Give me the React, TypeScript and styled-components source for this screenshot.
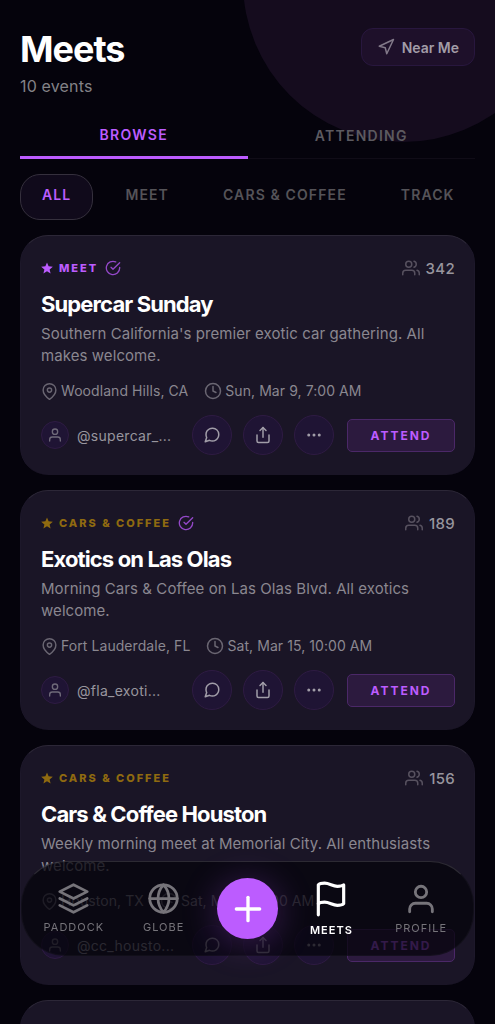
import React from 'react';
import styled, { createGlobalStyle, css } from 'styled-components';
import {
  FiCheckCircle,
  FiClock,
  FiFlag,
  FiGlobe,
  FiLayers,
  FiMapPin,
  FiMessageCircle,
  FiMoreHorizontal,
  FiNavigation,
  FiPlus,
  FiShare,
  FiUser,
  FiUsers,
} from 'react-icons/fi';

const ACCENT = '#bc5cff';
const GOLD = '#8f6a10';

const GlobalStyle = createGlobalStyle`
  *, *::before, *::after { box-sizing: border-box; }
  body {
    margin: 0;
    background: #05030c;
    color: #fff;
    font-family: Inter, "Liberation Sans", sans-serif;
  }
  button { font: inherit; color: inherit; cursor: pointer; }
  h1, h2, p { margin: 0; }
`;

const Screen = styled.div`
  position: relative;
  height: 100vh;
  overflow: hidden;
  padding: 0 20px;
`;

const Glow = styled.div`
  position: absolute;
  top: -178px;
  right: -68px;
  width: 320px;
  height: 320px;
  border-radius: 50%;
  background: #150c1e;
`;

const Header = styled.header`
  position: relative;
  display: flex;
  justify-content: space-between;
  align-items: flex-start;
  padding-top: 28px;
`;

const Title = styled.h1`
  font-size: 36px;
  line-height: 42px;
  font-weight: 700;
  letter-spacing: -1px;
`;

const Subtitle = styled.p`
  margin-top: 5px;
  font-size: 16px;
  line-height: 22px;
  letter-spacing: 0.01em;
  color: #838287;
`;

const NearMe = styled.button`
  display: flex;
  align-items: center;
  gap: 7px;
  height: 38px;
  padding: 0 15px;
  border: 1px solid #28173e;
  border-radius: 12px;
  background: #1e102a;
  font-size: 14px;
  font-weight: 600;
  color: #a29ca7;
  svg { color: #827989; }
`;

const Tabs = styled.nav`
  position: relative;
  display: flex;
  height: 44px;
  margin-top: 18px;
  border-bottom: 1px solid #100c17;
`;

const Tab = styled.button<{ $active?: boolean }>`
  flex: 1;
  height: 44px;
  padding: 0 0 ${(p) => (p.$active ? '2px' : '0')};
  border: 0;
  border-bottom: 3px solid ${(p) => (p.$active ? ACCENT : 'transparent')};
  background: none;
  font-size: 14px;
  font-weight: 600;
  letter-spacing: 0.09em;
  color: ${(p) => (p.$active ? ACCENT : '#5c5a60')};
`;

const Filters = styled.div`
  position: relative;
  display: flex;
  gap: 10px;
  margin: 15px -20px 0 0;
  overflow: hidden;
`;

const Filter = styled.button<{ $active?: boolean }>`
  flex: none;
  height: 46px;
  padding: 0 21px 6px;
  border: 1px solid ${(p) => (p.$active ? '#35303d' : 'transparent')};
  border-radius: 20px;
  background: ${(p) => (p.$active ? '#100a1b' : 'none')};
  font-size: 14px;
  font-weight: 600;
  letter-spacing: 0.08em;
  color: ${(p) => (p.$active ? ACCENT : '#555358')};
`;

const Feed = styled.main`
  position: relative;
  display: flex;
  flex-direction: column;
  gap: 15px;
  margin-top: 15px;
`;

const Card = styled.article`
  padding: 20px 19px 20px 20px;
  border: 1px solid #1d182a;
  border-top-color: #2c2737;
  border-bottom-width: 0;
  border-radius: 28px;
  background: #1a1526;
`;

const CardTop = styled.div`
  display: flex;
  justify-content: space-between;
  align-items: center;
  height: 24px;
`;

const Kind = styled.div<{ $gold?: boolean }>`
  display: flex;
  align-items: center;
  font-size: 11px;
  font-weight: 800;
  letter-spacing: 0.18em;
  color: ${(p) => (p.$gold ? GOLD : ACCENT)};
`;

const KindLabel = styled.span`
  margin: 0 7px 0 6px;
`;

const Verified = styled(FiCheckCircle)`
  color: #9448c9;
`;

const Count = styled.div`
  display: flex;
  align-items: center;
  gap: 6px;
  font-size: 15px;
  font-weight: 500;
  letter-spacing: 0.02em;
  color: #98959e;
  svg { color: #57515f; }
`;

const CardTitle = styled.h2`
  margin-top: 10px;
  font-size: 22px;
  line-height: 28px;
  font-weight: 700;
  letter-spacing: -0.04em;
`;

const Description = styled.p`
  margin-top: 5px;
  font-size: 15px;
  line-height: 22px;
  letter-spacing: 0.005em;
  color: #8a8790;
`;

const Meta = styled.div`
  display: flex;
  gap: 16px;
  margin-top: 14px;
  font-size: 14px;
  line-height: 20px;
  letter-spacing: 0.005em;
  color: #8a8790;
`;

const MetaItem = styled.span`
  display: flex;
  align-items: center;
  gap: 3px;
  svg { color: #6a6672; }
`;

const Actions = styled.div`
  display: flex;
  align-items: center;
  gap: 11px;
  margin-top: 14px;
`;

const Host = styled.div`
  display: flex;
  flex: 1;
  align-items: center;
  gap: 8px;
  min-width: 0;
  font-size: 14px;
  letter-spacing: 0.02em;
  color: #98959e;
`;

const round = css`
  display: flex;
  flex: none;
  align-items: center;
  justify-content: center;
  border: 1px solid #2e1b43;
  border-radius: 50%;
  background: #1f1434;
`;

const Avatar = styled.span`
  ${round}
  width: 28px;
  height: 28px;
  color: #6f6a79;
`;

const IconButton = styled.button`
  ${round}
  width: 40px;
  height: 40px;
  padding: 0;
  color: #a19da8;
`;

const Attend = styled.button`
  width: 108px;
  height: 33px;
  margin-left: 2px;
  padding: 0;
  border: 1px solid #4b2868;
  border-radius: 5px;
  background: #2c1a3e;
  font-size: 12px;
  font-weight: 700;
  letter-spacing: 2px;
  color: ${ACCENT};
`;

const BottomNav = styled.nav`
  position: fixed;
  left: 21px;
  right: 21px;
  bottom: 68px;
  display: flex;
  align-items: center;
  height: 95px;
  padding: 0 7px;
  border: 1px solid rgba(255, 255, 255, 0.03);
  border-top-color: rgba(255, 255, 255, 0.14);
  border-radius: 44px;
  background: rgba(6, 4, 12, 0.75);
`;

const NavItem = styled.button<{ $active?: boolean }>`
  display: flex;
  flex: 1;
  flex-direction: column;
  align-items: center;
  gap: 4px;
  padding: 0;
  border: 0;
  background: none;
  font-size: 11px;
  line-height: 16px;
  font-weight: ${(p) => (p.$active ? 600 : 400)};
  letter-spacing: 1px;
  color: ${(p) => (p.$active ? '#fff' : '#76747a')};
`;

const Slot = styled.div`
  display: flex;
  flex: none;
  justify-content: center;
  width: 78px;
`;

const AddButton = styled.button`
  display: flex;
  align-items: center;
  justify-content: center;
  width: 61px;
  height: 61px;
  padding: 0;
  border: 0;
  border-radius: 50%;
  background: ${ACCENT};
  box-shadow: 0 4px 36px rgba(188, 92, 255, 0.27);
`;

const Star = () => (
  <svg width="12" height="12" viewBox="0 0 24 24" fill="currentColor" aria-hidden="true">
    <path d="M12 .8l3.200 7.800 8.500.7-6.500 5.500 2 8.300L12 18.600l-7.200 4.500 2-8.300L.3 9.300l8.500-.7z" />
  </svg>
);

type Meet = {
  kind: string;
  gold?: boolean;
  verified?: boolean;
  count: number;
  title: string;
  text: string;
  place: string;
  time: string;
  host: string;
};

const meets: Meet[] = [
  {
    kind: 'MEET',
    verified: true,
    count: 342,
    title: 'Supercar Sunday',
    text: "Southern California's premier exotic car gathering. All makes welcome.",
    place: 'Woodland Hills, CA',
    time: 'Sun, Mar 9, 7:00 AM',
    host: '@supercar_...',
  },
  {
    kind: 'CARS & COFFEE',
    gold: true,
    verified: true,
    count: 189,
    title: 'Exotics on Las Olas',
    text: 'Morning Cars & Coffee on Las Olas Blvd. All exotics welcome.',
    place: 'Fort Lauderdale, FL',
    time: 'Sat, Mar 15, 10:00 AM',
    host: '@fla_exoti...',
  },
  {
    kind: 'CARS & COFFEE',
    gold: true,
    count: 156,
    title: 'Cars & Coffee Houston',
    text: 'Weekly morning meet at Memorial City. All enthusiasts welcome.',
    place: 'Houston, TX',
    time: 'Sat, Mar 8, 8:00 AM',
    host: '@cc_housto...',
  },
];

const MeetCard = ({ meet }: { meet: Meet }) => (
  <Card>
    <CardTop>
      <Kind $gold={meet.gold}>
        <Star />
        <KindLabel>{meet.kind}</KindLabel>
        {meet.verified && <Verified size={16} />}
      </Kind>
      <Count>
        <FiUsers size={18} />
        {meet.count}
      </Count>
    </CardTop>
    <CardTitle>{meet.title}</CardTitle>
    <Description>{meet.text}</Description>
    <Meta>
      <MetaItem>
        <FiMapPin size={17} />
        {meet.place}
      </MetaItem>
      <MetaItem>
        <FiClock size={18} />
        {meet.time}
      </MetaItem>
    </Meta>
    <Actions>
      <Host>
        <Avatar>
          <FiUser size={16} />
        </Avatar>
        {meet.host}
      </Host>
      <IconButton aria-label="Comment">
        <FiMessageCircle size={18} />
      </IconButton>
      <IconButton aria-label="Share">
        <FiShare size={18} />
      </IconButton>
      <IconButton aria-label="More">
        <FiMoreHorizontal size={18} />
      </IconButton>
      <Attend>ATTEND</Attend>
    </Actions>
  </Card>
);

export default function App() {
  return (
    <>
      <GlobalStyle />
      <Screen>
        <Glow />
        <Header>
          <div>
            <Title>Meets</Title>
            <Subtitle>10 events</Subtitle>
          </div>
          <NearMe>
            <FiNavigation size={18} />
            Near Me
          </NearMe>
        </Header>
        <Tabs>
          <Tab $active>BROWSE</Tab>
          <Tab>ATTENDING</Tab>
        </Tabs>
        <Filters>
          <Filter $active>ALL</Filter>
          <Filter>MEET</Filter>
          <Filter>CARS &amp; COFFEE</Filter>
          <Filter>TRACK</Filter>
        </Filters>
        <Feed>
          {meets.map((meet) => (
            <MeetCard key={meet.title} meet={meet} />
          ))}
          <Card>
            <CardTop />
          </Card>
        </Feed>
        <BottomNav>
          <NavItem>
            <FiLayers size={33} />
            PADDOCK
          </NavItem>
          <NavItem>
            <FiGlobe size={33} />
            GLOBE
          </NavItem>
          <Slot>
            <AddButton aria-label="Add">
              <FiPlus size={40} />
            </AddButton>
          </Slot>
          <NavItem $active>
            <FiFlag size={38} />
            MEETS
          </NavItem>
          <NavItem>
            <FiUser size={34} />
            PROFILE
          </NavItem>
        </BottomNav>
      </Screen>
    </>
  );
}
